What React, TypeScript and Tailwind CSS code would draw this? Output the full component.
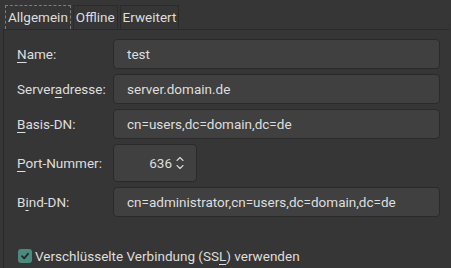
import React from 'react';

function Mn({ children }: { children: React.ReactNode }) {
  return <span className="underline decoration-1 underline-offset-[3px]">{children}</span>;
}

function Field({ label, value }: { label: React.ReactNode; value: string }) {
  return (
    <div className="flex items-center">
      <div className="w-[96px] shrink-0">{label}</div>
      <div className="flex h-[30px] w-[327px] items-center rounded-[4px] border border-[#2a2a2a] bg-[#404040] pl-[13px]">
        {value}
      </div>
    </div>
  );
}

function SpinArrows() {
  return (
    <svg width="8" height="16" viewBox="0 0 8 16" fill="none" stroke="#d8d8d8" strokeWidth="1.1" strokeLinecap="round" strokeLinejoin="round">
      <path d="M1 5.5 L4 2.5 L7 5.5" />
      <path d="M1 10.5 L4 13.5 L7 10.5" />
    </svg>
  );
}

export default function App() {
  return (
    <div
      className="flex h-[268px] w-[451px] flex-col overflow-hidden bg-[#363636] text-[13.5px] text-[#dedede]"
      style={{ fontFamily: 'Roboto, "Noto Sans", sans-serif' }}
    >
      <div className="flex h-[29px] items-end gap-[2px] pl-[5px]">
        <div className="flex h-[24px] items-center border border-b-0 border-dashed border-[#7d7d7d] px-[2px]">Allgemein</div>
        <div className="flex h-[24px] items-center border border-b-0 border-[#2b2b2b] px-[2px]">Offline</div>
        <div className="flex h-[24px] items-center border border-b-0 border-[#2b2b2b] px-[2px]">Erweitert</div>
      </div>
      <div className="ml-[3px] mr-[2px] flex flex-1 flex-col gap-[5px] border-l border-t border-[#2a2a2a] pl-[13px] pt-[9px]">
        <Field label={<><Mn>N</Mn>ame:</>} value="test" />
        <Field label={<>Server<Mn>a</Mn>dresse:</>} value="server.domain.de" />
        <Field label={<><Mn>B</Mn>asis-DN:</>} value="cn=users,dc=domain,dc=de" />
        <div className="flex items-center">
          <div className="w-[96px] shrink-0"><Mn>P</Mn>ort-Nummer:</div>
          <div className="flex h-[38px] w-[84px] items-center justify-end gap-[4px] rounded-[4px] border border-[#2a2a2a] bg-[#404040] pr-[12px]">
            <span>636</span>
            <SpinArrows />
          </div>
        </div>
        <Field label={<>B<Mn>i</Mn>nd-DN:</>} value="cn=administrator,cn=users,dc=domain,dc=de" />
        <div className="mt-[24px] flex items-center gap-[3px] pl-[1px]">
          <div className="flex h-[14px] w-[14px] items-center justify-center rounded-[3px] bg-[#4c8a80]">
            <svg width="10" height="10" viewBox="0 0 10 10" fill="none" stroke="#1f2a28" strokeWidth="1.8" strokeLinecap="round" strokeLinejoin="round">
              <path d="M2 5.2 L4.2 7.3 L8 2.8" />
            </svg>
          </div>
          <span>Verschlüsselte Verbindung (SS<Mn>L</Mn>) verwenden</span>
        </div>
      </div>
    </div>
  );
}
